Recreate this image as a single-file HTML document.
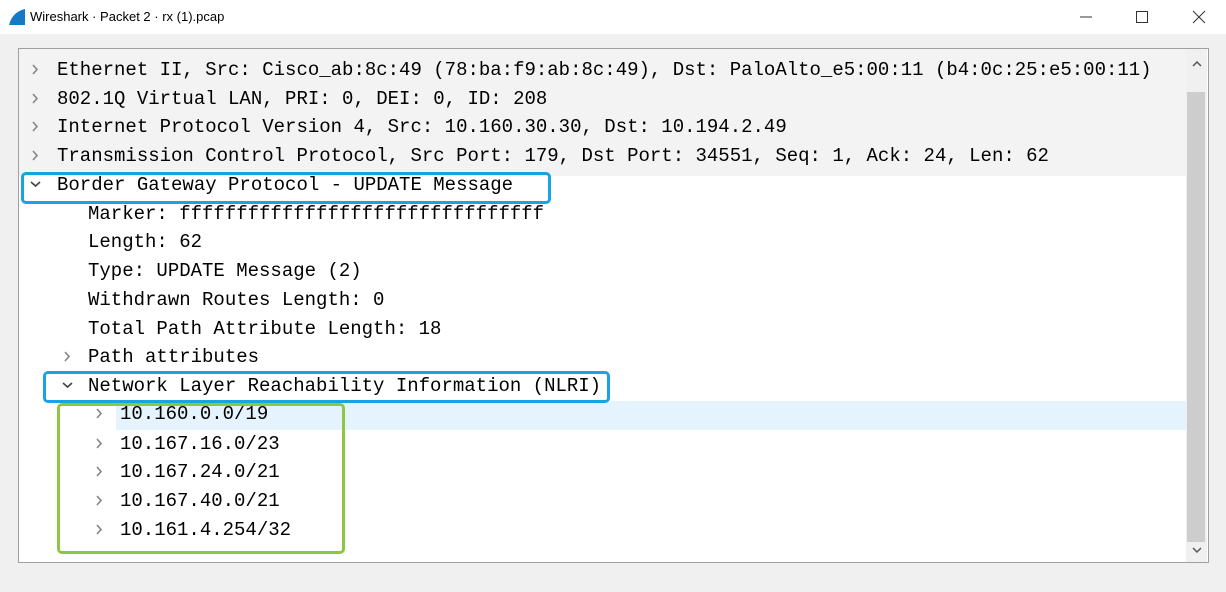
<!DOCTYPE html>
<html><head><style>
body{margin:0;width:1226px;height:592px;background:#f0f0f0;position:relative;overflow:hidden;font-family:"Liberation Mono",monospace}
.title{position:absolute;left:0;top:0;width:1226px;height:34px;background:#fff}
.title span{position:absolute;left:30px;top:9px;font:13px "Liberation Sans",sans-serif;color:#000}
.panel{position:absolute;left:18px;top:48px;width:1189px;height:513px;border:1px solid #a0a0a0;background:#fff;overflow:hidden}
.grayarea{position:absolute;left:0;top:0;width:1167px;height:127px;background:#f3f3f3}
.sel{position:absolute;left:97px;top:352px;width:1070px;height:29px;background:#e5f3ff}
.row{position:absolute;height:29px;line-height:29px;font-size:19px;color:#000;white-space:pre}
.ar{position:absolute;width:10px;height:10px}
.sb{position:absolute;left:1167px;top:0;width:21px;height:513px;background:#f0f0f0}
.thumb{position:absolute;left:1168px;top:43px;width:18px;height:450px;background:#cdcdcd}
.box{position:absolute;border-radius:5px}
</style></head><body>
<div class="title">
<svg style="position:absolute;left:8px;top:8px" width="18" height="18" viewBox="0 0 18 18"><path d="M1 17 C3 9 8 3 17 1 L17 17 Z" fill="#1679c5"/></svg>
<span>Wireshark · Packet 2 · rx (1).pcap</span>
<svg style="position:absolute;left:1080px;top:8px" width="130" height="18"><line x1="0" y1="9" x2="12" y2="9" stroke="#333"/><rect x="56.5" y="3.5" width="11" height="11" fill="none" stroke="#333"/><path d="M113 3 L125 15 M125 3 L113 15" stroke="#333"/></svg>
</div>
<div class="panel">
<div class="grayarea"></div>
<div class="sel"></div>
<div class="sb"></div><div class="thumb"></div>
<svg style="position:absolute;left:1172px;top:11px" width="12" height="8"><path d="M2 6 L6 2 L10 6" fill="none" stroke="#555" stroke-width="1.5"/></svg>
<svg style="position:absolute;left:1172px;top:497px" width="12" height="8"><path d="M2 2 L6 6 L10 2" fill="none" stroke="#555" stroke-width="1.5"/></svg>
</div>
<div class="row" style="left:57px;top:56px">Ethernet II, Src: Cisco_ab:8c:49 (78:ba:f9:ab:8c:49), Dst: PaloAlto_e5:00:11 (b4:0c:25:e5:00:11)</div>
<div class="row" style="left:57px;top:85px">802.1Q Virtual LAN, PRI: 0, DEI: 0, ID: 208</div>
<div class="row" style="left:57px;top:113px">Internet Protocol Version 4, Src: 10.160.30.30, Dst: 10.194.2.49</div>
<div class="row" style="left:57px;top:142px">Transmission Control Protocol, Src Port: 179, Dst Port: 34551, Seq: 1, Ack: 24, Len: 62</div>
<div class="row" style="left:57px;top:171px">Border Gateway Protocol - UPDATE Message</div>
<div class="row" style="left:88px;top:200px">Marker: ffffffffffffffffffffffffffffffff</div>
<div class="row" style="left:88px;top:228px">Length: 62</div>
<div class="row" style="left:88px;top:257px">Type: UPDATE Message (2)</div>
<div class="row" style="left:88px;top:286px">Withdrawn Routes Length: 0</div>
<div class="row" style="left:88px;top:315px">Total Path Attribute Length: 18</div>
<div class="row" style="left:88px;top:343px">Path attributes</div>
<div class="row" style="left:88px;top:372px">Network Layer Reachability Information (NLRI)</div>
<div class="row" style="left:120px;top:400px">10.160.0.0/19</div>
<div class="row" style="left:120px;top:430px">10.167.16.0/23</div>
<div class="row" style="left:120px;top:458px">10.167.24.0/21</div>
<div class="row" style="left:120px;top:487px">10.167.40.0/21</div>
<div class="row" style="left:120px;top:516px">10.161.4.254/32</div>
<svg width="1226" height="592" style="position:absolute;left:0;top:0" fill="none" stroke="#858585" stroke-width="1.6">
<path d="M33 65 L37 69.5 L33 74"/><path d="M33 94 L37 98.5 L33 103"/><path d="M33 122 L37 126.5 L33 131"/><path d="M33 151 L37 155.5 L33 160"/>
<path d="M31 182 L35.5 186 L40 182" stroke="#444"/>
<path d="M65 352 L69 356.5 L65 361"/>
<path d="M63 383 L67.5 387 L72 383" stroke="#444"/>
<path d="M97 409 L101 413.5 L97 418"/><path d="M97 439 L101 443.5 L97 448"/><path d="M97 467 L101 471.5 L97 476"/><path d="M97 496 L101 500.5 L97 505"/><path d="M97 525 L101 529.5 L97 534"/>
</svg>
<div class="box" style="left:21px;top:172px;width:524px;height:26px;border:3px solid #1aa3e0"></div>
<div class="box" style="left:43px;top:371px;width:561px;height:26px;border:3px solid #1aa3e0"></div>
<div class="box" style="left:57px;top:403px;width:282px;height:145px;border:3px solid #8dc63f"></div>
</body></html>
